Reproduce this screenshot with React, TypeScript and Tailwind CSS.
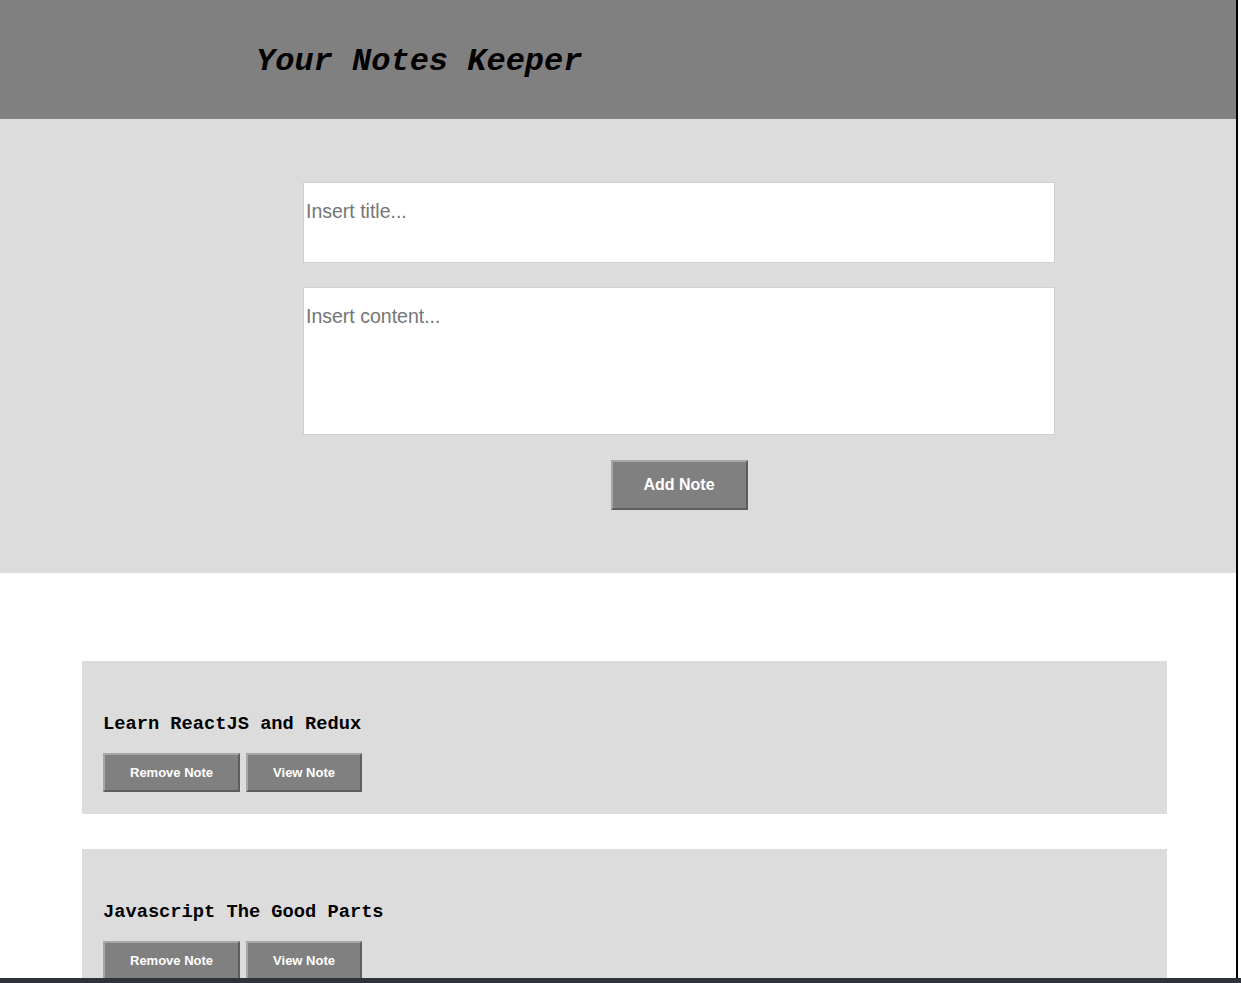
const notes = [
  { id: 1, title: 'Learn ReactJS and Redux' },
  { id: 2, title: 'Javascript The Good Parts' },
];

const btn =
  "bg-[#808080] text-white font-bold border-2 border-t-[#a6a6a6] border-l-[#a6a6a6] border-b-[#5e5e5e] border-r-[#5e5e5e] font-['Liberation_Sans',Arial,sans-serif]";

function NoteCard({ title }: { title: string }) {
  return (
    <div className="ml-[82px] w-[1085px] bg-[#dcdcdc] pt-[53px] pb-[22px] pl-[21px] mb-[35px]">
      <h3 className="font-['Liberation_Mono','Courier_New',monospace] font-bold text-[18.72px] leading-[21px] text-black mb-[18px]">
        {title}
      </h3>
      <div className="flex gap-[6px]">
        <button className={`${btn} h-[39px] px-[25px] text-[13px]`}>Remove Note</button>
        <button className={`${btn} h-[39px] px-[25px] text-[13px]`}>View Note</button>
      </div>
    </div>
  );
}

export default function App() {
  return (
    <div className="w-[1241px] h-[983px] flex flex-col overflow-hidden bg-white">
      <div className="flex-1 overflow-hidden flex">
        <div className="w-[1238px] border-r-2 border-black">
          <header className="h-[119px] bg-[#808080] pl-[256px] pt-[43px]">
            <h1 className="font-['Liberation_Mono','Courier_New',monospace] font-bold italic text-[32px] leading-[37px] text-black">
              Your Notes Keeper
            </h1>
          </header>

          <section className="bg-[#dcdcdc] pt-[63px] pb-[63px]">
            <div className="ml-[303px] w-[752px] flex flex-col items-center font-['Liberation_Sans',Arial,sans-serif]">
              <input
                placeholder="Insert title..."
                className="w-full h-[81px] bg-white border border-[#d0d0d0] pl-[2px] pt-[17px] pb-[40px] text-[19.5px] leading-[22px] placeholder:text-[#757575] outline-none"
              />
              <textarea
                placeholder="Insert content..."
                className="w-full h-[148px] mt-[24px] bg-white border border-[#d0d0d0] pl-[2px] pt-[17px] text-[19.5px] leading-[22px] placeholder:text-[#757575] outline-none resize-none"
              />
              <button className={`${btn} mt-[25px] w-[137px] h-[50px] text-[16px]`}>Add Note</button>
            </div>
          </section>

          <div className="pt-[88px]">
            {notes.map((n) => (
              <NoteCard key={n.id} title={n.title} />
            ))}
          </div>
        </div>
      </div>
      <div className="h-[5px] bg-[#2f323a]" />
    </div>
  );
}
